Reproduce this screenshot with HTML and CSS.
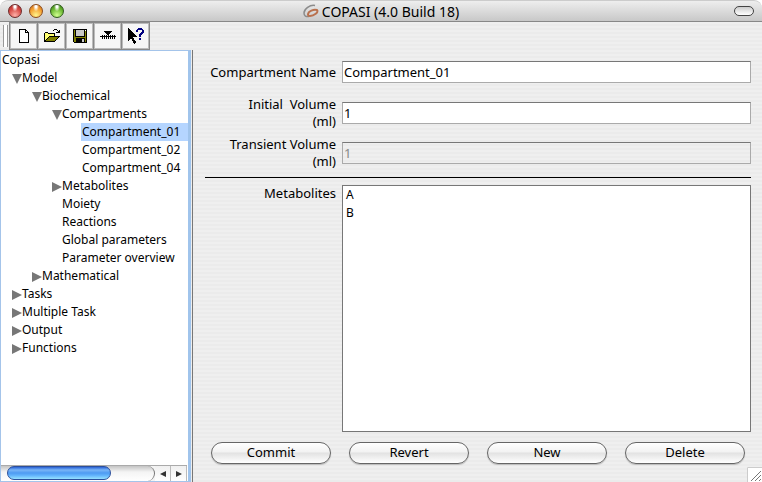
FILE: index.html
```html
<!DOCTYPE html>
<html lang="en">
<head>
<meta charset="utf-8">
<title>COPASI (4.0 Build 18)</title>
<link rel="stylesheet" href="styles.css">
</head>
<body>
<div class="window">
  <header class="titlebar">
    <div class="lights">
      <button class="light red" aria-label="Close"></button>
      <button class="light amber" aria-label="Minimize"></button>
      <button class="light green" aria-label="Zoom"></button>
    </div>
    <h1 class="title">
      <svg width="16" height="14" viewBox="0 0 16 14" fill="none" aria-hidden="true">
        <path d="M12 1.5C7 .5 1 5 1 9C1 12 3 13 6 12.500" stroke="#8b8b8b" stroke-width="1.500"/>
        <path d="M5 10.500C5 7 11 5 14 6C16 8 11 12 7 12C5 12 5 11 5 10.500" stroke="#b9714e" stroke-width="2"/>
      </svg>
      <span>COPASI (4.0 Build 18)</span>
    </h1>
    <button class="pill" aria-label="Toggle toolbar"></button>
  </header>

  <div class="toolbar">
    <span class="grip"></span>
    <div class="tools">
      <button class="tool" aria-label="New">
        <svg width="16" height="16" viewBox="0 0 16 16" shape-rendering="crispEdges" aria-hidden="true"><path d="M3.5 1.5H9.5L12.5 4.5V14.5H3.5ZM9.5 1.5V4.5H12.5" fill="#fff" stroke="#000"/></svg>
      </button>
      <button class="tool" aria-label="Open">
        <svg width="16" height="16" viewBox="0 0 16 16" shape-rendering="crispEdges" aria-hidden="true"><path d="M.5 13.5V5.5L1.5 4.5H3.5L4.5 5.5H10.5V8.5H5.5Z" fill="#ffff70" stroke="#000"/><path d="M.5 13.5L5.5 8.5H15.5L10.5 13.5Z" fill="#808000" stroke="#000"/><path d="M9 2.5H10M10 1.5H13M13 2.5H14M14 3.5H15M12 4.5H15M15 2V5" stroke="#000"/></svg>
      </button>
      <button class="tool" aria-label="Save">
        <svg width="16" height="16" viewBox="0 0 16 16" shape-rendering="crispEdges" aria-hidden="true"><path d="M1.5 1.5H14.5V14.5H2.5L1.5 13.5Z" fill="#808000" stroke="#000"/><path d="M4 2H12V8H4Z" fill="#c8c8c8"/><path d="M3.5 2V8.5H12.5V2" fill="none" stroke="#000"/><path d="M4 10H13V14H4Z" fill="#000"/><path d="M10 11H12V14H10Z" fill="#c8c8c8"/><path d="M13 2H14V3H13Z" fill="#fff"/></svg>
      </button>
      <button class="tool" aria-label="Sliders">
        <svg width="16" height="16" viewBox="0 0 16 16" shape-rendering="crispEdges" aria-hidden="true"><path d="M0 8.5H16M2.5 7V11M4.500 7V11M6.500 7V11M8.500 7V11M10.500 7V11M12.500 7V11M14.500 7V11" stroke="#000"/><path d="M4 3H12V4H11V5H10V6H9V7H7V6H6V5H5V4H4Z"/></svg>
      </button>
      <button class="tool" aria-label="What's this?">
        <svg width="18" height="18" viewBox="0 0 18 18" shape-rendering="crispEdges" aria-hidden="true"><path d="M1 1L10 10H6L9 15L7 17L4 11L1 14Z"/><path d="M9 5V3H10V2H11V1H15V2H16V3H17V6H16V7H15V8H14V10H12V7H13V6H14V5H15V3H11V5ZM12 11H14V13H12Z" fill="#000080"/></svg>
      </button>
    </div>
  </div>

  <div class="content">
    <nav class="sidebar">
      <ul class="tree">
        <li><span class="row">Copasi</span>
          <ul>
            <li><span class="row open">Model</span>
              <ul>
                <li><span class="row open">Biochemical</span>
                  <ul>
                    <li><span class="row open">Compartments</span>
                      <ul>
                        <li><span class="row selected">Compartment_01</span></li>
                        <li><span class="row">Compartment_02</span></li>
                        <li><span class="row">Compartment_04</span></li>
                      </ul>
                    </li>
                    <li><span class="row closed">Metabolites</span></li>
                    <li><span class="row">Moiety</span></li>
                    <li><span class="row">Reactions</span></li>
                    <li><span class="row">Global parameters</span></li>
                    <li><span class="row">Parameter overview</span></li>
                  </ul>
                </li>
                <li><span class="row closed">Mathematical</span></li>
              </ul>
            </li>
            <li><span class="row closed">Tasks</span></li>
            <li><span class="row closed">Multiple Task</span></li>
            <li><span class="row closed">Output</span></li>
            <li><span class="row closed">Functions</span></li>
          </ul>
        </li>
      </ul>
      <div class="scrollbar">
        <div class="track"><div class="thumb"></div></div>
        <button class="arrow" aria-label="Scroll left"><svg width="6" height="6" viewBox="0 0 6 6" aria-hidden="true"><path d="M6 0V6L0 3Z" fill="#333"/></svg></button>
        <button class="arrow" aria-label="Scroll right"><svg width="6" height="6" viewBox="0 0 6 6" aria-hidden="true"><path d="M0 0V6L6 3Z" fill="#333"/></svg></button>
      </div>
    </nav>

    <main class="panel">
      <form class="form">
        <div class="field name">
          <label for="name">Compartment Name</label>
          <input id="name" type="text" value="Compartment_01">
        </div>
        <div class="field">
          <label for="initial">Initial &nbsp;Volume<br>(ml)</label>
          <input id="initial" type="text" value="1">
        </div>
        <div class="field">
          <label for="transient">Transient Volume<br>(ml)</label>
          <input id="transient" type="text" value="1" disabled>
        </div>
        <hr>
        <div class="field list">
          <label for="metabolites">Metabolites</label>
          <select id="metabolites" size="2">
            <option>A</option>
            <option>B</option>
          </select>
        </div>
        <div class="actions">
          <button type="button">Commit</button>
          <button type="button">Revert</button>
          <button type="button">New</button>
          <button type="button">Delete</button>
        </div>
      </form>
      <svg class="resize" width="15" height="15" viewBox="0 0 15 15" aria-hidden="true"><path d="M0 0H15V15H0Z" fill="#fff"/><path d="M.5 15V.5H15" fill="none" stroke="#ccc"/><path d="M4 14L14 4M8 14L14 8M12 14L14 12" stroke="#777"/></svg>
    </main>
  </div>
</div>
</body>
</html>
```
FILE: styles.css
```css
* { box-sizing: border-box; }

body {
  margin: 0;
  background: #fff;
  color: #000;
  font: 13px/17px "Noto Sans", sans-serif;
}

button, input, select {
  margin: 0;
  padding: 0;
  border: 0;
  border-radius: 0;
  color: inherit;
  font: inherit;
  appearance: none;
}

ul { margin: 0; padding: 0; list-style: none; }

.window {
  display: flex;
  flex-direction: column;
  height: 100vh;
  overflow: hidden;
  border-radius: 8px 8px 0 0;
  background: repeating-linear-gradient(#ebebeb 0 2px, #efefef 2px 4px);
}

.titlebar {
  display: grid;
  grid-template-columns: 1fr auto 1fr;
  align-items: center;
  height: 22px;
  padding: 0 8px;
  border-top: 1px solid #ccc;
  border-bottom: 1px solid #888;
  border-radius: 8px 8px 0 0;
  background: linear-gradient(#eee, #c8c8c8);
}

.lights { display: flex; gap: 7px; }

.light {
  width: 14px;
  height: 14px;
  border: 1px solid #555;
  border-radius: 50%;
}
.red { border-color: #6c2a2a; background: radial-gradient(ellipse at 50% 10%, #fff 0 10%, transparent 35%), radial-gradient(circle at 50% 85%, #ffb0a8, #d4453f 60%, #a02a28); }
.amber { border-color: #8a4a1c; background: radial-gradient(ellipse at 50% 10%, #fff 0 10%, transparent 35%), radial-gradient(circle at 50% 85%, #fff58c, #f39c2c 60%, #b8621c); }
.green { border-color: #2f5a1c; background: radial-gradient(ellipse at 50% 10%, #fff 0 10%, transparent 35%), radial-gradient(circle at 50% 85%, #d0ff90, #66b42e 60%, #357018); }

.title {
  display: flex;
  align-items: center;
  gap: 3px;
  margin: 0;
  font-size: 14px;
  font-weight: 400;
}

.pill {
  justify-self: end;
  width: 20px;
  height: 10px;
  border: 1px solid #444;
  border-radius: 5px;
  background: linear-gradient(#ccc, #fff);
}

.toolbar { display: flex; flex: none; height: 28px; padding-left: 3px; }

.grip {
  width: 5px;
  margin: 3px 1px 3px 0;
  border: solid #999;
  border-width: 0 1px;
  background: #fff;
}

.tools {
  display: flex;
  gap: 1px;
  padding: 1px;
  background: #888;
}

.tool {
  display: grid;
  place-items: center;
  width: 27px;
  border: 1px solid #bbb;
  background: #f6f6f6;
}

.content { display: flex; flex: 1; min-height: 0; }

.sidebar {
  display: flex;
  flex: none;
  flex-direction: column;
  width: 191px;
  margin-right: 1px;
  border: 1px solid #a4c4ea;
  border-right: 3px solid #a0c4ec;
  background: #fff;
}

.tree {
  flex: 1;
  overflow: hidden;
  font-size: 12px;
  line-height: 18px;
}
.tree ul { padding-left: 20px; }

.row { display: flex; padding-left: 1px; white-space: nowrap; }
.selected { background: #b5d5ff; }

.open::before, .closed::before {
  content: "";
  width: 10px;
  height: 10px;
  margin: 5px 0 0 -10px;
  background: #777;
}
.open::before { clip-path: polygon(0 0, 100% 0, 50% 100%); }
.closed::before { clip-path: polygon(0 0, 100% 50%, 0 100%); }

.scrollbar {
  display: flex;
  height: 16px;
  margin-right: 1px;
  border-top: 1px solid #aaa;
  background: #f4f4f4;
}
.track {
  flex: 1;
  padding-left: 6px;
  border-radius: 0 8px 8px 0;
  border-right: 1px solid #777;
  background: linear-gradient(#c4c4c4, #f4f4f4 40%, #fff);
}
.thumb {
  width: 71%;
  height: 14px;
  border: 1px solid #2b4f9c;
  border-radius: 7px;
  background: linear-gradient(#2860d4, #79b5f7 25%, #4e9bf2 50%, #62b3fc 70%, #96e2ff);
}
.arrow {
  display: grid;
  place-items: center;
  width: 16px;
  border-right: 1px solid #bbb;
  background: linear-gradient(#f0f0f0, #fff);
}

.panel {
  position: relative;
  display: flex;
  flex: 1;
  min-width: 0;
  border-left: 1px solid #777;
}

.form {
  display: flex;
  flex: 1;
  flex-direction: column;
  min-width: 0;
  padding: 11px 11px 18px 12px;
}

.field {
  display: grid;
  grid-template-columns: 131px 1fr;
  column-gap: 6px;
  align-items: center;
  margin-bottom: 6px;
  text-align: right;
}
.name { margin-bottom: 13px; }

.field input {
  width: 100%;
  height: 22px;
  padding: 0 1px;
  border: 1px solid #aaa;
  border-top-color: #777;
  background: #fff;
}
.field input:disabled { background: transparent; color: #888; }

hr {
  width: 100%;
  height: 1px;
  margin: 1px 0 7px;
  border: 0;
  background: #000;
}

.list { flex: 1; align-items: start; margin-bottom: 10px; }
.list select {
  width: 100%;
  height: 100%;
  border: 1px solid #777;
  outline: 0;
  background: #fff;
  font-size: 12px;
}
.list option { min-height: 18px; padding: 0 3px; line-height: 18px; }

.actions { display: flex; gap: 18px; padding: 0 6px; }
.actions button {
  flex: 1;
  height: 22px;
  padding-bottom: 2px;
  border: 1px solid #666;
  border-radius: 11px;
  background: linear-gradient(#fff, #f2f2f2 45%, #e2e2e2 50%, #fff);
  box-shadow: 0 1px 1px #bbb;
}

.resize { position: absolute; right: 0; bottom: 0; }
```
